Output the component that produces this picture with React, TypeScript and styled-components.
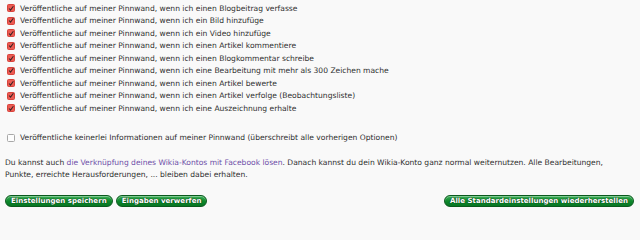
import React from 'react';
import styled, { createGlobalStyle } from 'styled-components';

const GlobalStyle = createGlobalStyle`
  html, body {
    margin: 0;
    padding: 0;
    background: #f9f9f9;
  }
  body {
    font-family: "DejaVu Sans", Verdana, sans-serif;
    color: #2f2f2f;
  }
`;

const Page = styled.div`
  width: 640px;
  height: 211px;
  box-sizing: border-box;
  padding: 2px 6px 0 5px;
  font-size: 7.57px;
`;

const OptionList = styled.ul`
  list-style: none;
  margin: 0;
  padding: 0 0 0 2px;
`;

const OptionRow = styled.li<{ $gap?: number }>`
  display: flex;
  align-items: center;
  height: 12.5px;
  margin-top: ${(p) => p.$gap || 0}px;
  white-space: nowrap;
`;

const Box = styled.span<{ $checked: boolean }>`
  flex: none;
  width: 8px;
  height: 8px;
  margin-right: 5px;
  box-sizing: border-box;
  border-radius: 1.5px;
  display: flex;
  align-items: center;
  justify-content: center;
  background: ${(p) => (p.$checked ? '#ec5a52' : '#fdfdfd')};
  border: 1px solid ${(p) => (p.$checked ? '#d8433b' : '#a8a8a8')};
`;

const Note = styled.p`
  margin: 13px 0 0 0;
  padding-right: 20px;
  line-height: 12px;
`;

const Link = styled.a`
  color: #6e4fa8;
  text-decoration: none;
`;

const ButtonBar = styled.div`
  display: flex;
  align-items: center;
  margin-top: 14px;
  gap: 3px;
`;

const Spacer = styled.div`
  flex: 1;
`;

const GreenButton = styled.button`
  font-family: "DejaVu Sans", Verdana, sans-serif;
  font-size: 7.05px;
  font-weight: bold;
  color: #fff;
  height: 12px;
  padding: 0 5px;
  border-radius: 6px;
  border: 1px solid #0b5a1e;
  background: linear-gradient(#3fb05a, #0e8a2c 50%, #077523);
  box-shadow: inset 0 1px 0 rgba(255, 255, 255, 0.35);
  text-shadow: 0 0 1px #053312, 0 0 1px #053312;
  line-height: 10px;
  cursor: pointer;
  white-space: nowrap;
`;

const CheckMark = () => (
  <svg width="7" height="7" viewBox="0 0 10 10">
    <path d="M1.8 5 L4.2 7.6 L9 1.2" fill="none" stroke="#3a2222" strokeWidth="1.8" />
  </svg>
);

const options = [
  'Veröffentliche auf meiner Pinnwand, wenn ich einen Blogbeitrag verfasse',
  'Veröffentliche auf meiner Pinnwand, wenn ich ein Bild hinzufüge',
  'Veröffentliche auf meiner Pinnwand, wenn ich ein Video hinzufüge',
  'Veröffentliche auf meiner Pinnwand, wenn ich einen Artikel kommentiere',
  'Veröffentliche auf meiner Pinnwand, wenn ich einen Blogkommentar schreibe',
  'Veröffentliche auf meiner Pinnwand, wenn ich eine Bearbeitung mit mehr als 300 Zeichen mache',
  'Veröffentliche auf meiner Pinnwand, wenn ich einen Artikel bewerte',
  'Veröffentliche auf meiner Pinnwand, wenn ich einen Artikel verfolge (Beobachtungsliste)',
  'Veröffentliche auf meiner Pinnwand, wenn ich eine Auszeichnung erhalte',
];

export default function App() {
  return (
    <>
      <GlobalStyle />
      <Page>
        <OptionList>
          {options.map((text) => (
            <OptionRow key={text}>
              <Box $checked>
                <CheckMark />
              </Box>
              {text}
            </OptionRow>
          ))}
          <OptionRow $gap={17}>
            <Box $checked={false} />
            Veröffentliche keinerlei Informationen auf meiner Pinnwand (überschreibt alle vorherigen Optionen)
          </OptionRow>
        </OptionList>
        <Note>
          Du kannst auch <Link href="#">die Verknüpfung deines Wikia-Kontos mit Facebook lösen</Link>. Danach kannst du
          dein Wikia-Konto ganz normal weiternutzen. Alle Bearbeitungen, Punkte, erreichte Herausforderungen, ... bleiben
          dabei erhalten.
        </Note>
        <ButtonBar>
          <GreenButton>Einstellungen speichern</GreenButton>
          <GreenButton>Eingaben verwerfen</GreenButton>
          <Spacer />
          <GreenButton>Alle Standardeinstellungen wiederherstellen</GreenButton>
        </ButtonBar>
      </Page>
    </>
  );
}
